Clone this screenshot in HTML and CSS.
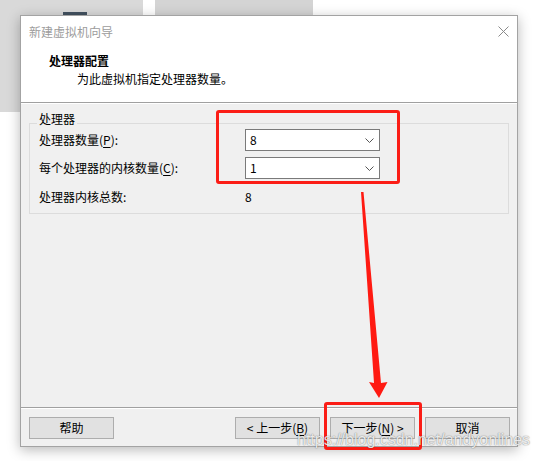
FILE: index.html
```html
<!DOCTYPE html>
<html lang="zh-CN">
<head>
<meta charset="utf-8">
<title>新建虚拟机向导</title>
<link rel="stylesheet" href="styles.css">
</head>
<body>
<div class="desk">
  <div class="bgwin bg-a"></div>
  <div class="bgwin bg-b"></div>
  <div class="bgwin bg-mark"></div>

  <div class="dialog">
    <div class="titlebar">
      <span class="title">新建虚拟机向导</span>
      <svg class="close" width="11" height="11" viewBox="0 0 11 11"><path d="M0.5 0.5 L10.5 10.5 M10.5 0.5 L0.5 10.5" stroke="#8a8a8a" stroke-width="1" fill="none"/></svg>
    </div>
    <div class="header">
      <div class="h-title">处理器配置</div>
      <div class="h-sub">为此虚拟机指定处理器数量。</div>
    </div>
    <div class="body">
      <div class="group">
        <span class="legend">处理器</span>
        <div class="rows">
          <div class="row">
            <span class="label">处理器数量(<u>P</u>):</span>
            <div class="select"><span class="val">8</span><svg class="chev" width="9" height="5" viewBox="0 0 9 5"><path d="M0.5 0.5 L4.5 4.5 L8.5 0.5" stroke="#555" stroke-width="1" fill="none"/></svg></div>
          </div>
          <div class="row row2">
            <span class="label">每个处理器的内核数量(<u>C</u>):</span>
            <div class="select"><span class="val">1</span><svg class="chev" width="9" height="5" viewBox="0 0 9 5"><path d="M0.5 0.5 L4.5 4.5 L8.5 0.5" stroke="#555" stroke-width="1" fill="none"/></svg></div>
          </div>
          <div class="row row3">
            <span class="label">处理器内核总数:</span>
            <span class="total">8</span>
          </div>
        </div>
      </div>
    </div>
    <div class="footer">
      <button class="btn">帮助</button>
      <div class="btns">
        <button class="btn">&lt; 上一步(<u>B</u>)</button>
        <button class="btn">下一步(<u>N</u>) &gt;</button>
        <button class="btn">取消</button>
      </div>
    </div>
  </div>

  <div class="redbox box1"></div>
  <div class="redbox box2"></div>
  <svg class="arrow" width="539" height="461" viewBox="0 0 539 461">
    <polygon points="361,192 363.5,192 381,383 387.5,382 379,398 369,382 374,383" fill="#ff1a12"/>
  </svg>
  <div class="watermark">https://blog.csdn.net/andyonlines</div>
</div>
</body>
</html>
```

FILE: styles.css
```css
html, body {
  margin: 0;
  padding: 0;
  background: #ffffff;
}
body {
  font-family: "Noto Sans CJK SC", "Noto Sans", sans-serif;
  font-size: 12px;
  color: #000;
}
.desk {
  position: relative;
  width: 539px;
  height: 461px;
  overflow: hidden;
  background: #ffffff;
}
.bgwin {
  position: absolute;
}
.bg-a {
  left: 0;
  top: 0;
  width: 143px;
  height: 112px;
  background: #d9d9d9;
}
.bg-b {
  left: 155px;
  top: 0;
  width: 158px;
  height: 60px;
  background: #d4d4d4;
}
.bg-mark {
  left: 63px;
  top: 12px;
  width: 24px;
  height: 4px;
  background: #435260;
}
.dialog {
  position: absolute;
  left: 20px;
  top: 15px;
  width: 498px;
  height: 432px;
  box-sizing: border-box;
  border: 1px solid #a3a3a3;
  background: #f0f0f0;
  box-shadow: 0 3px 12px rgba(0, 0, 0, 0.28);
  display: flex;
  flex-direction: column;
}
.titlebar {
  height: 32px;
  background: #fff;
  display: flex;
  align-items: center;
  justify-content: space-between;
  padding: 0 8px 0 8px;
}
.title {
  color: #9c9c9c;
  line-height: 32px;
  margin-top: -1px;
}
.close {
  display: block;
  margin-top: -2px;
}
.header {
  background: #fff;
  height: 54px;
  box-sizing: border-box;
  padding: 4px 0 0 28px;
  border-bottom: 1px solid #a0a0a0;
  box-sizing: content-box;
  height: 50px;
}
.h-title {
  font-weight: bold;
  line-height: 18px;
}
.h-sub {
  line-height: 18px;
  padding-left: 28px;
}
.body {
  flex: 1;
  border-top: 1px solid #ffffff;
  padding: 19px 8px 0 8px;
}
.group {
  border: 1px solid #dcdcdc;
  padding: 0 0 5px 9px;
}
.legend {
  display: block;
  width: fit-content;
  line-height: 16px;
  margin: -13px 0 0 -2px;
  padding: 0 2px;
  background: #f0f0f0;
}
.rows {
  padding-top: 2px;
}
.row {
  display: flex;
  align-items: center;
  height: 22px;
}
.row2 {
  margin-top: 6px;
}
.row3 {
  margin-top: 7px;
}
.label {
  width: 206px;
  line-height: 16px;
}
.label u, .btn u {
  text-decoration: underline;
  text-underline-offset: 2px;
}
.select {
  width: 135px;
  height: 22px;
  box-sizing: border-box;
  border: 1px solid #7a7a7a;
  background: #fff;
  display: flex;
  align-items: center;
  justify-content: space-between;
  padding: 0 5px 0 4px;
}
.val, .total {
  line-height: 16px;
}
.chev {
  display: block;
}
.footer {
  border-top: 1px solid #a0a0a0;
  box-shadow: inset 0 1px 0 #ffffff;
  padding: 9px 7px 7px 8px;
  display: flex;
  justify-content: space-between;
}
.btns {
  display: flex;
  gap: 10px;
}
.btn {
  width: 85px;
  height: 22px;
  box-sizing: border-box;
  border: 1px solid #adadad;
  background: #e1e1e1;
  font-family: "Noto Sans CJK SC", "Noto Sans", sans-serif;
  font-size: 12px;
  color: #000;
  padding: 0;
  line-height: 18px;
}
.redbox {
  position: absolute;
  box-sizing: border-box;
  border: 3px solid #fb1d16;
  border-radius: 3px;
}
.box1 {
  left: 216px;
  top: 110px;
  width: 184px;
  height: 74px;
}
.box2 {
  left: 324px;
  top: 402px;
  width: 98px;
  height: 48px;
}
.arrow {
  position: absolute;
  left: 0;
  top: 0;
}
.watermark {
  position: absolute;
  left: 297px;
  top: 430px;
  font-family: "Liberation Sans", Arial, sans-serif;
  font-size: 16px;
  line-height: 20px;
  color: rgba(255, 255, 255, 0.85);
  text-shadow: 0 0 1px rgba(0, 0, 0, 0.45), 0 0 2px rgba(0, 0, 0, 0.2);
  white-space: nowrap;
}
```
